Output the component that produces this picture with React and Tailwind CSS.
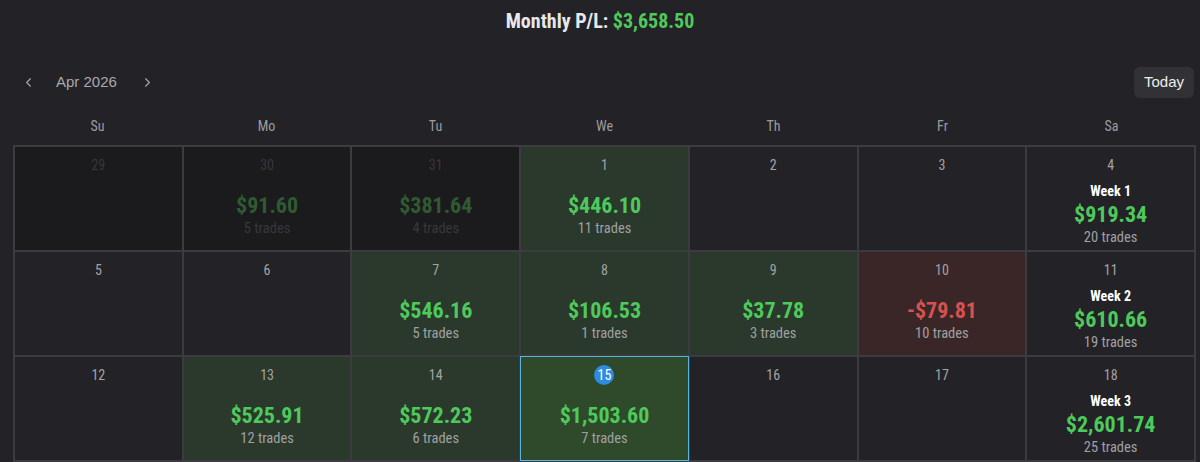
import { ChevronLeft, ChevronRight } from 'lucide-react'

const cond = { fontFamily: '"Roboto Condensed", Roboto, "Liberation Sans", sans-serif' }

const days = ['Su', 'Mo', 'Tu', 'We', 'Th', 'Fr', 'Sa']

const weeks = [
  [
    { d: 29, out: true },
    { d: 30, out: true, pl: '$91.60', t: '5 trades' },
    { d: 31, out: true, pl: '$381.64', t: '4 trades' },
    { d: 1, pl: '$446.10', t: '11 trades' },
    { d: 2 },
    { d: 3 },
    { d: 4, week: 'Week 1', pl: '$919.34', t: '20 trades' },
  ],
  [
    { d: 5 },
    { d: 6 },
    { d: 7, pl: '$546.16', t: '5 trades' },
    { d: 8, pl: '$106.53', t: '1 trades' },
    { d: 9, pl: '$37.78', t: '3 trades' },
    { d: 10, pl: '-$79.81', t: '10 trades', loss: true },
    { d: 11, week: 'Week 2', pl: '$610.66', t: '19 trades' },
  ],
  [
    { d: 12 },
    { d: 13, pl: '$525.91', t: '12 trades' },
    { d: 14, pl: '$572.23', t: '6 trades' },
    { d: 15, pl: '$1,503.60', t: '7 trades', today: true },
    { d: 16 },
    { d: 17 },
    { d: 18, week: 'Week 3', pl: '$2,601.74', t: '25 trades' },
  ],
]

function Cell({ c }) {
  let bg = 'bg-[#232227]'
  if (c.out) bg = 'bg-[#1b1a1d]'
  else if (c.today) bg = 'bg-[#2e4a2b]'
  else if (c.loss) bg = 'bg-[#3a2627]'
  else if (c.pl && !c.week) bg = 'bg-[#2a392b]'

  const border = c.today ? 'border-[#58b4e0]' : 'border-[#3c3b3f]'

  return (
    <div className={`h-[105px] border ${border} ${bg} flex flex-col items-center pt-[8px]`} style={cond}>
      {c.today ? (
        <div className="w-[20px] h-[20px] rounded-full bg-[#2d8be0] text-white text-[14px] flex items-center justify-center">{c.d}</div>
      ) : (
        <div className={`text-[14px] leading-[20px] ${c.out ? 'text-[#38373b]' : 'text-[#a3a3a6]'}`}>{c.d}</div>
      )}
      {c.week ? (
        <>
          <div className="mt-[7px] text-[14px] leading-[18px] font-bold text-white">{c.week}</div>
          <div className="mt-[1px] text-[22px] leading-[27px] font-bold text-[#4ec95b]">{c.pl}</div>
          <div className="text-[14.5px] leading-[20px] text-[#a0a0a3]">{c.t}</div>
        </>
      ) : c.pl ? (
        <>
          <div className={`mt-[17px] text-[22px] leading-[27px] font-bold ${c.out ? 'text-[#2f5a32]' : c.loss ? 'text-[#d6514f]' : 'text-[#4ec95b]'}`}>{c.pl}</div>
          <div className={`text-[14.5px] leading-[20px] ${c.out ? 'text-[#38373b]' : 'text-[#a0a0a3]'}`}>{c.t}</div>
        </>
      ) : null}
    </div>
  )
}

export default function App() {
  return (
    <div className="w-[1200px] h-[462px] overflow-hidden bg-[#232227]">
      <div className="h-[41px] flex items-center justify-center text-[20px] font-bold text-[#e8e8ea]" style={cond}>
        Monthly P/L:&nbsp;<span className="text-[#4ec95b]">$3,658.50</span>
      </div>

      <div className="flex items-center justify-between pl-[21px] pr-[6px] mt-[25px] h-[32px]" style={{ fontFamily: '"Liberation Sans", Arial, sans-serif' }}>
        <div className="flex items-center text-[#a9a9ac]">
          <ChevronLeft size={15} strokeWidth={1.75} />
          <span className="ml-[20px] text-[15px]">Apr 2026</span>
          <ChevronRight size={15} strokeWidth={1.75} className="ml-[23px]" />
        </div>
        <button className="h-[31px] px-[10px] rounded-md bg-[#323236] text-[15px] text-[#ececee]">Today</button>
      </div>

      <div className="ml-[13px] mr-[4px]">
        <div className="grid grid-cols-7 h-[47px] items-center pt-[9px]" style={cond}>
          {days.map(d => (
            <div key={d} className="text-center text-[14px] text-[#9c9ca0]">{d}</div>
          ))}
        </div>
        <div className="grid grid-cols-7 border border-[#3c3b3f]">
          {weeks.flat().map((c, i) => <Cell key={i} c={c} />)}
        </div>
      </div>
    </div>
  )
}
